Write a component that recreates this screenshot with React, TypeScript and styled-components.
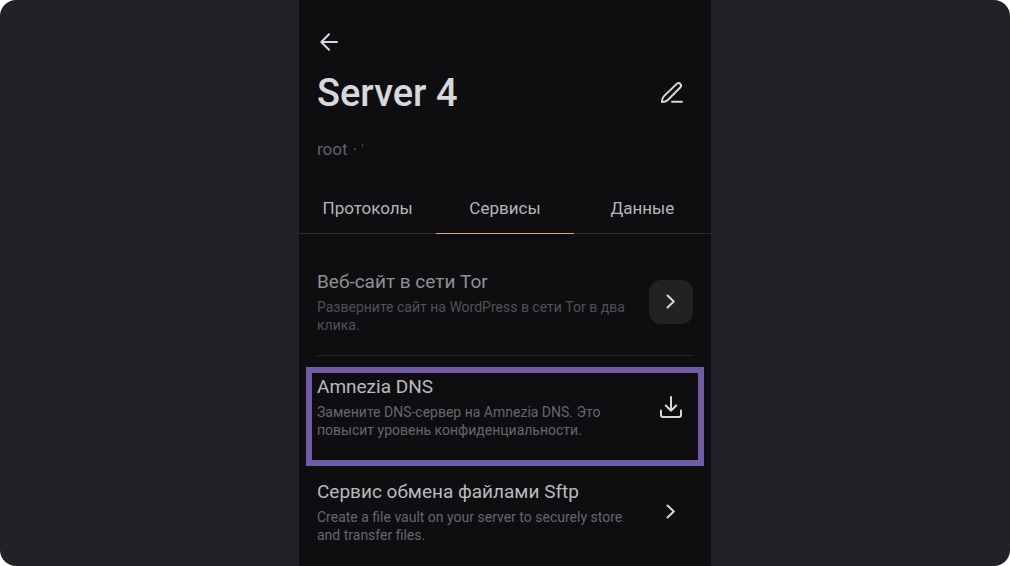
import React from "react";
import styled, { createGlobalStyle } from "styled-components";

const GlobalStyle = createGlobalStyle`
  *, *::before, *::after { box-sizing: border-box; }
  body {
    margin: 0;
    background: #ffffff;
    font-family: Roboto, "Noto Sans", sans-serif;
  }
  button {
    font: inherit;
    color: inherit;
    background: none;
    border: 0;
    padding: 0;
    cursor: pointer;
  }
`;

const Backdrop = styled.div`
  display: flex;
  justify-content: center;
  min-height: 100vh;
  background: #212227;
  border-radius: 16px;
`;

const Panel = styled.main`
  width: 100%;
  max-width: 412px;
  padding-top: 22px;
  background: #0e0e10;
  color: #d7d8db;
`;

const Header = styled.header`
  padding: 0 18px;
`;

const IconButton = styled.button<{ $filled?: boolean }>`
  display: flex;
  flex: none;
  align-items: center;
  justify-content: center;
  width: 44px;
  height: 44px;
  border-radius: 12px;
  background: ${(p) => (p.$filled ? "#222223" : "transparent")};
`;

const BackButton = styled(IconButton)`
  width: 40px;
  height: 40px;
  margin-left: -8px;
`;

const TitleRow = styled.div`
  display: flex;
  align-items: center;
  justify-content: space-between;
  margin-top: 8px;
`;

const Title = styled.h1`
  margin: 0;
  font-size: 38px;
  font-weight: 500;
  line-height: 46px;
`;

const Subtitle = styled.p`
  display: flex;
  gap: 5px;
  margin: 23px 0 25px;
  font-size: 17px;
  line-height: 20px;
  color: #606166;
`;

const Tick = styled.span`
  width: 1px;
  height: 3px;
  margin-top: 5px;
  background: #3c4a5c;
`;

const Tabs = styled.nav`
  display: grid;
  grid-template-columns: repeat(3, 1fr);
  border-bottom: 1px solid #2c2d30;
`;

const Tab = styled.button<{ $active?: boolean }>`
  height: 50px;
  margin-bottom: -1px;
  padding-bottom: 2px;
  border-bottom: 1px solid ${(p) => (p.$active ? "#e0a468" : "transparent")};
  font-size: 17px;
  line-height: 24px;
  color: #b4b5b8;
`;

const List = styled.ul`
  margin: 0;
  padding: 17px 18px 0;
  list-style: none;
`;

const Row = styled.li<{ $highlighted?: boolean }>`
  position: relative;
  display: flex;
  align-items: center;
  justify-content: space-between;
  gap: 12px;
  padding: 18px 0 21px;

  &:not(:last-child) {
    border-bottom: 1px solid #2a2a2c;
  }

  &::after {
    content: "";
    display: ${(p) => (p.$highlighted ? "block" : "none")};
    position: absolute;
    inset: 11px -11px -6px;
    border: 6px solid #705ca4;
    pointer-events: none;
  }
`;

const RowText = styled.div`
  min-width: 0;
  padding-top: 1px;
`;

const RowTitle = styled.h2<{ $dim?: boolean }>`
  margin: 0 0 4px;
  font-size: 19px;
  font-weight: 400;
  line-height: 24px;
  color: ${(p) => (p.$dim ? "#8f9092" : "#b9babd")};
`;

const RowNote = styled.p<{ $dim?: boolean }>`
  margin: 0;
  font-size: 14px;
  line-height: 18px;
  color: ${(p) => (p.$dim ? "#505155" : "#66676b")};
`;

const Glyph = styled.svg`
  display: block;
  width: 24px;
  height: 24px;
  fill: none;
  stroke: #d7d8db;
  stroke-width: 2;
  stroke-linecap: round;
  stroke-linejoin: round;
`;

const paths = {
  back: "M20 12H4.3M12 4.2L4.3 12L12 19.8",
  edit: "M13 20.7H23M3 21C2.9 18.4 3.6 16.5 5 15.1L17.7 2.9A2.5 2.5 0 0 1 21.2 6.5L8.8 19C7.4 20.4 5.5 21.1 3 21Z",
  chevron: "M8.5 5.5L14.8 11.5L8.5 17.5",
  download: "M12 2V15.5M6.8 10.5L12 15.7L17.2 10.5M2 15.5V20A2 2 0 0 0 4 22H20A2 2 0 0 0 22 20V15.5",
};

function Icon({ name }: { name: keyof typeof paths }) {
  return (
    <Glyph viewBox="0 0 24 24" aria-hidden="true">
      <path d={paths[name]} />
    </Glyph>
  );
}

type Service = {
  title: string;
  note: string;
  icon: "chevron" | "download";
  hovered?: boolean;
  highlighted?: boolean;
};

const services: Service[] = [
  {
    title: "Веб-сайт в сети Tor",
    note: "Разверните сайт на WordPress в сети Tor в два клика.",
    icon: "chevron",
    hovered: true,
  },
  {
    title: "Amnezia DNS",
    note: "Замените DNS-сервер на Amnezia DNS. Это повысит уровень конфиденциальности.",
    icon: "download",
    highlighted: true,
  },
  {
    title: "Сервис обмена файлами Sftp",
    note: "Create a file vault on your server to securely store and transfer files.",
    icon: "chevron",
  },
];

export default function App() {
  return (
    <>
      <GlobalStyle />
      <Backdrop>
        <Panel>
          <Header>
            <BackButton aria-label="Назад">
              <Icon name="back" />
            </BackButton>
            <TitleRow>
              <Title>Server 4</Title>
              <IconButton aria-label="Изменить имя">
                <Icon name="edit" />
              </IconButton>
            </TitleRow>
            <Subtitle>
              <span>root</span>
              <span>·</span>
              <Tick />
            </Subtitle>
          </Header>
          <Tabs>
            <Tab>Протоколы</Tab>
            <Tab $active aria-current="page">
              Сервисы
            </Tab>
            <Tab>Данные</Tab>
          </Tabs>
          <List>
            {services.map((s) => (
              <Row key={s.title} $highlighted={s.highlighted}>
                <RowText>
                  <RowTitle $dim={s.hovered}>{s.title}</RowTitle>
                  <RowNote $dim={s.hovered}>{s.note}</RowNote>
                </RowText>
                <IconButton $filled={s.hovered} aria-label={s.title}>
                  <Icon name={s.icon} />
                </IconButton>
              </Row>
            ))}
          </List>
        </Panel>
      </Backdrop>
    </>
  );
}
